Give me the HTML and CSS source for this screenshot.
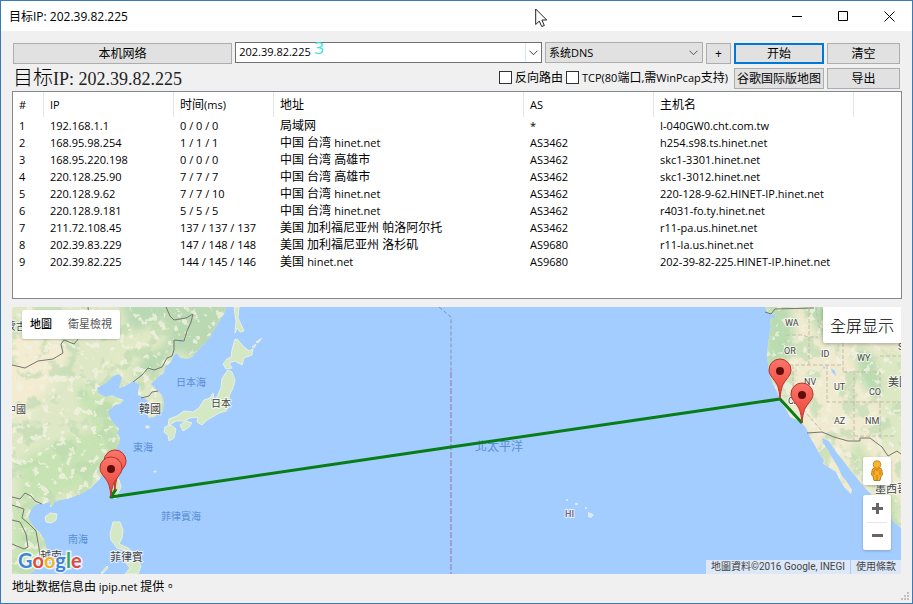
FILE: index.html
```html
<!DOCTYPE html>
<html lang="zh-CN">
<head>
<meta charset="utf-8">
<title>目标IP: 202.39.82.225</title>
<link rel="stylesheet" href="styles.css">
</head>
<body>
<div class="window">
  <header class="titlebar">
    <span class="title">目标IP: 202.39.82.225</span>
    <div class="caption-buttons">
      <button class="caption" aria-label="最小化"><svg width="11" height="11" viewBox="0 0 11 11"><path d="M0 5.500h10"/></svg></button>
      <button class="caption" aria-label="最大化"><svg width="11" height="11" viewBox="0 0 11 11"><path d="M.5.5h9v9h-9z"/></svg></button>
      <button class="caption" aria-label="关闭"><svg width="11" height="11" viewBox="0 0 11 11"><path d="M.5.5l10 10M10.500.5l-10 10"/></svg></button>
    </div>
  </header>

  <main class="content">
    <div class="toolbar">
      <button class="btn">本机网络</button>
      <div class="combo">
        <input class="combo-input" type="text" value="202.39.82.225" aria-label="目标地址">
        <button class="combo-drop" aria-label="展开"><svg width="9" height="6" viewBox="0 0 9 6"><path d="M.5.7l4 4 4-4"/></svg></button>
        <span class="queue-count">3</span>
      </div>
      <div class="select-wrap">
        <select class="dns" aria-label="DNS"><option>系统DNS</option></select>
        <svg class="select-arrow" width="9" height="6" viewBox="0 0 9 6"><path d="M.5.7l4 4 4-4"/></svg>
      </div>
      <button class="btn">+</button>
      <button class="btn primary">开始</button>
      <button class="btn">清空</button>
    </div>

    <div class="subbar">
      <h1 class="target">目标<span class="target-ip">IP: 202.39.82.225</span></h1>
      <label class="check"><input type="checkbox"><span>反向路由</span></label>
      <label class="check"><input type="checkbox"><span><span class="en">TCP(80</span>端口<span class="en">,</span>需<span class="en">WinPcap</span>支持<span class="en">)</span></span></label>
      <button class="btn map-btn">谷歌国际版地图</button>
      <button class="btn export-btn">导出</button>
    </div>

    <div class="list">
      <table class="hops">
        <colgroup><col class="c-n"><col class="c-ip"><col class="c-ms"><col class="c-addr"><col class="c-as"><col class="c-host"><col></colgroup>
        <thead><tr><th>#</th><th>IP</th><th><span class="cn">时间</span>(ms)</th><th class="cn">地址</th><th>AS</th><th class="cn">主机名</th><td></td></tr></thead>
        <tbody>
          <tr><td>1</td><td>192.168.1.1</td><td>0 / 0 / 0</td><td class="cn">局域网</td><td>*</td><td>I-040GW0.cht.com.tw</td><td></td></tr>
          <tr><td>2</td><td>168.95.98.254</td><td>1 / 1 / 1</td><td class="cn">中国 台湾 <span class="en">hinet.net</span></td><td>AS3462</td><td>h254.s98.ts.hinet.net</td><td></td></tr>
          <tr><td>3</td><td>168.95.220.198</td><td>0 / 0 / 0</td><td class="cn">中国 台湾 高雄市</td><td>AS3462</td><td>skc1-3301.hinet.net</td><td></td></tr>
          <tr><td>4</td><td>220.128.25.90</td><td>7 / 7 / 7</td><td class="cn">中国 台湾 高雄市</td><td>AS3462</td><td>skc1-3012.hinet.net</td><td></td></tr>
          <tr><td>5</td><td>220.128.9.62</td><td>7 / 7 / 10</td><td class="cn">中国 台湾 <span class="en">hinet.net</span></td><td>AS3462</td><td>220-128-9-62.HINET-IP.hinet.net</td><td></td></tr>
          <tr><td>6</td><td>220.128.9.181</td><td>5 / 5 / 5</td><td class="cn">中国 台湾 <span class="en">hinet.net</span></td><td>AS3462</td><td>r4031-fo.ty.hinet.net</td><td></td></tr>
          <tr><td>7</td><td>211.72.108.45</td><td>137 / 137 / 137</td><td class="cn">美国 加利福尼亚州 帕洛阿尔托</td><td>AS3462</td><td>r11-pa.us.hinet.net</td><td></td></tr>
          <tr><td>8</td><td>202.39.83.229</td><td>147 / 148 / 148</td><td class="cn">美国 加利福尼亚州 洛杉矶</td><td>AS9680</td><td>r11-la.us.hinet.net</td><td></td></tr>
          <tr><td>9</td><td>202.39.82.225</td><td>144 / 145 / 146</td><td class="cn">美国 <span class="en">hinet.net</span></td><td>AS9680</td><td>202-39-82-225.HINET-IP.hinet.net</td><td></td></tr>
        </tbody>
      </table>
    </div>

    <section class="map" lang="zh-TW">
      <svg class="map-canvas" viewBox="12 307 889 267" preserveAspectRatio="xMidYMid slice">
        <defs>
          <path id="asia" d="M12 307H226L224 314 220 320 214 330 210 337 204 344 198 350 192 357 187 359 181 358 176 353 173 357 171 362 165 367 164 373 158 377 155 380 151 384 157 390 162 395 164 403 163 412 158 413 155 417 149 418 146 413 149 407 147 400 143 397 138 395 138 390 140 385 133 381 130 383 125 386 119 388 122 378 119 374 113 376 106 383 97 388 98 393 106 397 112 395 118 398 124 400 120 404 115 405 108 411 110 418 114 424 119 429 117 433 120 438 119 444 114 452 111 460 104 468 100 479 91 488 83 493 78 495 67 499 60 500 55 502 52 506 50 507 50 502 43 504 37 504 32 508 28 517 31 523 35 528 40 533 44 539 47 550 45 560 38 566 34 571 29 574H12z"/>
          <path id="america" d="M765 307L767 312 773 315 776 312 775 318 770 319 771 327 769 337 768 345 767 354 768 364 770 377 775 388 780 398 783 405 787 411 790 417 797 420 802 423 806 428 810 437 814 444 819 453 824 460 823 464 830 468 836 472 840 480 844 487 851 494 852 490 847 482 842 476 838 467 833 459 828 450 823 443 822 438 829 441 832 446 837 453 845 463 850 470 857 478 863 486 870 493 878 503 887 513 894 522 901 528V307z"/>
          <g id="islands">
            <path d="M235 339L238 340 243 346 249 351 253 349 252 355 244 358 242 365 235 361 229 363 232 368 226 369 223 364 227 359 231 357 232 350z"/>
            <path d="M228 370L232 372 235 380 233 388 229 396 230 405 226 411 219 413 214 416 207 420 202 425 197 422 198 417 190 418 184 421 176 421 168 426 169 419 177 416 184 411 193 412 199 408 204 400 210 398 211 402 217 397 221 388 222 379 225 374z"/>
            <path d="M180 425L186 421 192 423 189 427 183 431zM165 427L171 425 176 429 174 438 169 441 168 435 164 432z"/>
            <path d="M234 307L239 307 238 318 244 331 240 332 237 328 235 333 236 321z"/>
            <path d="M45 517L50 513 57 514 56 520 51 523 46 522z"/>
            <path d="M113 474L119 480 121 487 117 495 115 499 112 490 111 482z"/>
            <path d="M113 522L120 522 123 530 122 538 119 544 128 548 134 553 127 551 117 548 111 540 110 534z"/>
            <path d="M122 558L129 562 138 560 141 566 138 574 125 574 130 568zM101 573L107 566 108 568 102 574zM132 554L138 552 139 558 134 559z"/>
            <path d="M146 426h3v2h-3zM151 413h2v1h-2zM154 471h2v1h-2zM210 398l3-5 1 5zM252 347l4-3-2 4zM256 342l6-4-4 5z"/>
          </g>
          <clipPath id="land"><use href="#asia"/><use href="#america"/></clipPath>
          <filter id="woods" x="0" y="0" width="1" height="1" color-interpolation-filters="sRGB"><feTurbulence type="fractalNoise" baseFrequency=".05" numOctaves="5" seed="8"/><feColorMatrix values="0 0 0 0 .73 0 0 0 0 .85 0 0 0 0 .69 9 0 0 0 -4.800"/></filter>
          <filter id="pale" x="0" y="0" width="1" height="1" color-interpolation-filters="sRGB"><feTurbulence type="fractalNoise" baseFrequency=".12" numOctaves="5" seed="21"/><feColorMatrix values="0 0 0 0 .95 0 0 0 0 .95 0 0 0 0 .88 14 0 0 0 -8.400"/></filter>
          <filter id="soft"><feGaussianBlur stdDeviation="4"/></filter>
          <linearGradient id="pinfill" x1="0" y1="0" x2="0" y2="1"><stop offset="0" stop-color="#fc766a"/><stop offset="1" stop-color="#ea3f34"/></linearGradient>
          <g id="pin"><path d="M0 0C-1-12-3-15-6-19-9-23-11-25-11-29A11 11 0 0 1 11-29C11-25 9-23 6-19 3-15 1-12 0 0z" fill="url(#pinfill)" stroke="#b4352d"/><circle cy="-28" r="4" fill="#610d0b"/></g>
        </defs>
        <path fill="#a3ccff" d="M12 307h889v267H12z"/>
        <use href="#asia" fill="#dfe8c6"/>
        <use href="#america" fill="#f0ebd0"/>
        <use href="#islands" fill="#d5e8c4" stroke="#e9f0e2"/>
        <path fill="#dce9f3" d="M566 499h2v2h-2zM575 503h3v2h-3zM585 507h2v2h-2zM588 512l3 1 3 2-3 3-3-1z"/>
        <g clip-path="url(#land)">
          <g filter="url(#soft)">
            <path fill="#f3ecd0" d="M0 326L45 325 70 345 55 380 38 400 25 420 0 415z"/>
            <path fill="#b9d9b3" d="M120 300H235L205 360 172 350 160 372 130 380 150 345 128 325z"/>
            <path fill="#c7e3b3" d="M75 385L120 400 116 460 80 490 20 505 20 460 60 440 95 430 80 405z"/>
            <path fill="#e1e9c5" d="M140 330L172 318 165 345 145 355 125 380 95 370z"/>
            <path fill="#b9dcb0" d="M765 300L790 305 795 335 785 355 778 392 765 370zM783 375L792 400 787 405zM800 300h40l-5 40-16-6zM855 345l20 10 10 45-15-5-12-20z"/>
            <path fill="#c7e3b3" d="M12 500L28 510 45 540 38 574H12zM850 450l50 80v-25l-42-65z"/>
            <path fill="#dce8c4" d="M880 350h25v100h-25z"/>
          </g>
          <path filter="url(#woods)" opacity=".6" d="M12 307h889v267H12z"/>
          <path filter="url(#pale)" opacity=".8" d="M12 307h889v267H12z"/>
          <path fill="#a3ccff" d="M831 368l4 3 1 5-4-4zM179 340l3 1-2 4zM823 366l2 1-1 3z"/>
        </g>
        <g class="border">
          <path d="M12 365L25 368 38 361 53 359 63 353 61 344 64 340 74 344 79 338 88 336 92 325 89 316 88 307M166 307L170 316 174 320 186 318 193 314 191 322 187 331 184 341 174 340 174 350 172 356 167 358 162 367 154 370 148 368 142 375 133 382M141 398L149 396 152 392 158 391M12 497L20 499 25 493 31 496 35 501 42 504M12 505L24 509 22 518 28 523 36 531 39 548 40 558 34 562M12 520L20 522 26 534 28 547 24 549 12 544M765 312L771 314 775 309 814 308M807 433L822 432 834 437 848 441 860 441 860 438 870 438 882 447 888 456 897 451 901 454"/>
        </g>
        <path class="state-lines" d="M786 335h16l6 2h10M771 365h72M793 365v33l28 32M827 365v37h75M854 402v38M809 307v58M843 372h37v32M854 371v31M880 404v35M816 307l3 20 11 11 17-1M854 436h40M880 356h22M843 343v30"/>
        <path class="dateline-top" d="M439 307l12 10v57"/>
        <path class="dateline" d="M451 372v202"/>
        <g class="sea">
          <text x="176" y="386" font-size="10">日本海</text><text x="133" y="451" font-size="10">東海</text>
          <text x="161" y="520" font-size="10">菲律賓海</text><text x="68" y="543" font-size="10">南海</text>
          <text x="475" y="451" font-size="12">北太平洋</text>
        </g>
        <g class="place">
          <text x="6" y="330" font-size="10">蒙古</text><text x="6" y="413" font-size="10">中國</text><text x="139" y="413" font-size="11">韓國</text>
          <text x="211" y="407" font-size="10">日本</text><text x="40" y="560" font-size="11">越南</text><text x="110" y="561" font-size="11">菲律賓</text>
          <text x="888" y="386" font-size="11">美國</text><text x="875" y="493" font-size="11">墨西哥</text>
          <text x="785" y="326">WA</text><text x="784" y="354">OR</text><text x="821" y="357">ID</text><text x="857" y="361">WY</text>
          <text x="804" y="385">NV</text><text x="834" y="390">UT</text><text x="869" y="395">CO</text><text x="788" y="404">CA</text>
          <text x="834" y="424">AZ</text><text x="865" y="424">NM</text><text x="898" y="350">SD</text><text x="565" y="517" class="hi">HI</text>
        </g>
        <path class="route" d="M116 489L111 497 451 447 705 410 780 399 802 423"/>
        <use href="#pin" x="115" y="490"/><use href="#pin" x="111" y="497"/>
        <use href="#pin" x="780" y="399"/><use href="#pin" x="802" y="423"/>
      </svg>

      <div class="map-types"><button class="map-type active">地圖</button><button class="map-type">衛星檢視</button></div>
      <button class="fullscreen">全屏显示</button>
      <div class="map-side">
        <button class="pegman" aria-label="街景服務"><svg width="14" height="22" viewBox="0 0 14 22"><path d="M3 8.500Q2 9 1.500 15l1.500 1 1 4.500h6L11 16l1.500-1Q12 9 11 8.500 7 6.500 3 8.500z" fill="#f9ae22" stroke="#b8801c"/><circle cx="7" cy="4.500" r="3.800" fill="#fbb52d" stroke="#c78c20"/><path d="M4.500 9L7 11.500 9.500 9z" fill="#e88314"/><path d="M7 15v5M4 10v5M10 10v5" stroke="#c77d16"/></svg></button>
        <div class="zoom">
          <button aria-label="放大"><svg width="11" height="11" viewBox="0 0 11 11"><path d="M0 5.500h11M5.500 0v11"/></svg></button>
          <button aria-label="縮小"><svg width="11" height="11" viewBox="0 0 11 11"><path d="M0 5.500h11"/></svg></button>
        </div>
      </div>
      <a class="google" href="#"><span class="b">G</span><span class="r">o</span><span class="y">o</span><span class="b">g</span><span class="g">l</span><span class="r">e</span></a>
      <div class="credits"><span>地圖資料©2016 Google, INEGI</span><a href="#">使用條款</a></div>
    </section>
  </main>

  <footer class="status">
    <span class="status-text">地址数据信息由 <span class="status-en">ipip.net</span> 提供<span lang="zh-TW">。</span></span>
    <svg class="grip" width="9" height="9" viewBox="0 0 9 9"><path d="M6 0h2v2H6zM3 3h2v2H3zM6 3h2v2H6zM0 6h2v2H0zM3 6h2v2H3zM6 6h2v2H6z"/></svg>
  </footer>
  <svg class="pointer" width="14" height="21" viewBox="0 0 14 21"><path d="M.7 1v15.500l3.600-3.400 2.400 5.400 2.600-1-2.400-5.500h4.800z"/></svg>
</div>
</body>
</html>
```
FILE: styles.css
```css
* { box-sizing: border-box; }

body {
  margin: 0;
  color: #000;
  font: 11px/17px "Open Sans", "Noto Sans CJK SC", sans-serif;
}

button, input, select {
  margin: 0;
  color: inherit;
  font: inherit;
}

.cn { font-size: 12px; }
.en { font-size: 11px; }

.window {
  position: relative;
  display: flex;
  flex-direction: column;
  min-height: 100vh;
  overflow: hidden;
  border: 1px solid #3a7bb5;
  background: #f0f0f0;
}

.titlebar {
  display: flex;
  align-items: center;
  justify-content: space-between;
  height: 30px;
  padding-left: 8px;
  background: #fff;
  font-size: 12px;
}

.caption-buttons { display: flex; }

.caption {
  width: 46px;
  height: 28px;
  padding: 0;
  border: 0;
  background: none;
}

.caption svg { display: block; margin: auto; fill: none; stroke: #000; }

.content {
  display: flex;
  flex: 1;
  flex-direction: column;
  padding: 11px 10px 0 11px;
}

.toolbar {
  display: grid;
  grid-template-columns: 220fr 308fr 158px 25px 90px 73px;
  gap: 3px;
  padding: 0 2px 0 1px;
}

.btn {
  height: 21px;
  margin-top: 1px;
  padding: 0;
  border: 1px solid #adadad;
  background: #e1e1e1;
  font-size: 12px;
  line-height: 17px;
  white-space: nowrap;
}

.btn.primary { border: 2px solid #0078d7; line-height: 15px; }

.combo {
  position: relative;
  display: flex;
  height: 21px;
  border: 1px solid #707070;
  background: #fff;
}

.combo-input {
  flex: 1;
  min-width: 0;
  padding: 0 3px 2px;
  border: 0;
  outline: 0;
  background: none;
}

.combo-drop {
  width: 16px;
  padding: 0;
  border: 0;
  border-left: 1px solid #d5e8f8;
  background: #fff;
}

.combo-drop svg { display: block; margin: auto; fill: none; stroke: #444; }

.queue-count {
  position: absolute;
  top: -4px;
  left: 78px;
  color: #32e0e6;
  font-size: 17px;
}

.select-wrap { position: relative; display: flex; height: 21px; }

.dns {
  flex: 1;
  padding: 0 3px;
  border: 1px solid #adadad;
  border-radius: 0;
  background: #e1e1e1;
  font-size: 11px;
  appearance: none;
}

.select-arrow {
  position: absolute;
  top: 8px;
  right: 5px;
  fill: none;
  stroke: #555;
  pointer-events: none;
}

.subbar {
  display: flex;
  align-items: center;
  height: 27px;
  gap: 3px;
  padding: 0 2px 0 1px;
}

.target {
  flex: 1;
  margin: 0;
  font: 300 20px/26px "Noto Sans CJK SC", sans-serif;
  white-space: nowrap;
}

.target-ip {
  color: #222;
  font: 18px/26px "Liberation Serif", serif;
}

.check {
  display: flex;
  align-items: center;
  gap: 3px;
  font-size: 12px;
  white-space: nowrap;
}

.check input {
  width: 13px;
  height: 13px;
  border: 1px solid #333;
  background: #fff;
  appearance: none;
}

.map-btn { width: 90px; margin-left: 3px; }
.export-btn { width: 73px; }

.list {
  min-height: 208px;
  border: 1px solid #828790;
  background: #fff;
}

.hops {
  width: 100%;
  border-spacing: 0;
  table-layout: fixed;
}

.c-n { width: 31px; }
.c-ip { width: 130px; }
.c-ms { width: 100px; }
.c-addr { width: 250px; }
.c-as { width: 130px; }
.c-host { width: 200px; }

.hops th, .hops td {
  height: 17px;
  padding: 0 0 0 6px;
  font-weight: 400;
  line-height: 17px;
  text-align: left;
  white-space: nowrap;
}

.hops th { height: 25px; border-right: 1px solid #e5e5e5; }

.map {
  position: relative;
  flex: 1;
  min-height: 267px;
  margin: 8px 1px 0 0;
  overflow: hidden;
  background: #a3ccff;
  font-family: Roboto, "Noto Sans CJK TC", sans-serif;
}

.map-canvas {
  position: absolute;
  width: 100%;
  height: 100%;
}

.border { fill: none; stroke: #77756f; stroke-width: 1; }
.state-lines { fill: none; stroke: #c4bda8; stroke-dasharray: 4 2; }
.dateline { fill: none; stroke: #9ba3cc; stroke-width: 2; stroke-dasharray: 6 2; }
.dateline-top { fill: none; stroke: #8b91b5; stroke-dasharray: 4 2; }
.route { fill: none; stroke: #087d16; stroke-width: 3; stroke-linejoin: round; }
.sea { fill: #5b8fd6; }

.place {
  fill: #444;
  stroke: #fff;
  stroke-opacity: .7;
  stroke-width: 2px;
  paint-order: stroke;
  font-size: 9px;
}

.hi { fill: #6f5f80; font-weight: 500; }

.map-types {
  position: absolute;
  top: 3px;
  left: 10px;
  display: flex;
  height: 29px;
  border-radius: 2px;
  background: #fff;
  box-shadow: 0 1px 2px #0003;
}

.map-type {
  padding: 0 8px;
  border: 0;
  background: none;
  color: #565656;
  font-size: 11px;
}

.map-type.active { color: #000; font-weight: 500; }

.fullscreen {
  position: absolute;
  top: 0;
  right: 0;
  width: 78px;
  height: 36px;
  padding: 0;
  border: 0;
  border-radius: 0 0 0 2px;
  background: #fff;
  box-shadow: 0 1px 4px #0005;
  font: 300 16px/24px "Noto Sans CJK SC", sans-serif;
}

.map-side {
  position: absolute;
  right: 10px;
  bottom: 24px;
  display: flex;
  flex-direction: column;
  gap: 10px;
}

.pegman, .zoom {
  width: 28px;
  border: 0;
  border-radius: 2px;
  background: #fff;
  box-shadow: 0 1px 3px #0003;
}

.pegman { height: 28px; padding: 0; }
.pegman svg { display: block; margin: auto; fill: none; }

.zoom button {
  width: 28px;
  height: 27px;
  padding: 0;
  border: 0;
  background: none;
}

.zoom { padding-bottom: 1px; display: grid; }
.zoom svg { display: block; margin: auto; fill: none; stroke: #666; stroke-width: 3; }
.zoom button + button { background: linear-gradient(#e6e6e6, #e6e6e6) top / 20px 1px no-repeat; }

.google {
  position: absolute;
  bottom: 2px;
  left: 6px;
  font: 700 20px/24px Lato, sans-serif;
  text-decoration: none;
  -webkit-text-stroke: 3px #fffc;
  paint-order: stroke;
}

.google .b { color: #4285d8; }
.google .r { color: #e04a3f; }
.google .y { color: #f2b51d; }
.google .g { color: #3aa757; }

.credits {
  position: absolute;
  right: 0;
  bottom: 0;
  display: flex;
  gap: 1px;
  color: #444;
  font-size: 10px;
  line-height: 14px;
}

.credits > * {
  padding: 0 5px;
  background: #dce8f8;
  color: inherit;
  text-decoration: none;
}

.status {
  display: flex;
  align-items: flex-end;
  justify-content: space-between;
  height: 29px;
  padding: 0 2px 2px 11px;
}

.status-text {
  align-self: flex-start;
  padding-top: 3px;
  font: 12px/17px "Noto Sans CJK SC", sans-serif;
}

.status-text [lang] { font-family: "Noto Sans CJK TC", sans-serif; }
.status-en { font-family: "Open Sans", sans-serif; font-size: 11px; }
.grip { fill: #bfbfbf; }

.pointer {
  position: absolute;
  top: 7px;
  left: 534px;
  fill: #fff;
  stroke: #222;
}
```
